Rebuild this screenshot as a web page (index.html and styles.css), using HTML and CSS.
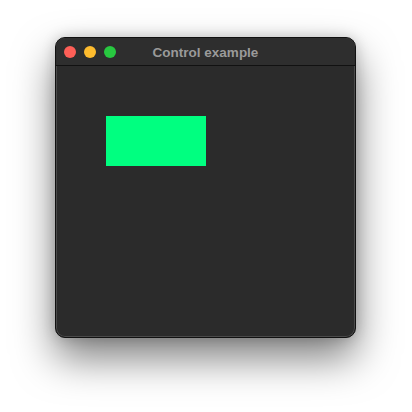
FILE: index.html
```html
<!DOCTYPE html>
<html>
<head>
<meta charset="utf-8">
<link rel="stylesheet" href="styles.css">
</head>
<body>
<div class="window">
  <div class="titlebar">
    <div class="lights">
      <span class="light red"></span>
      <span class="light yellow"></span>
      <span class="light green"></span>
    </div>
    <div class="title">Control example</div>
  </div>
  <div class="content">
    <div class="box"></div>
  </div>
</div>
</body>
</html>
```
FILE: styles.css
```css
html, body {
  margin: 0;
  padding: 0;
  background: #ffffff;
  width: 412px;
  height: 412px;
  overflow: hidden;
}
body {
  padding-top: 37px;
  padding-left: 55px;
  box-sizing: border-box;
  font-family: "Liberation Sans", Arial, sans-serif;
}
.window {
  width: 301px;
  height: 301px;
  box-sizing: border-box;
  border: 1px solid #111;
  border-radius: 10px;
  background: #2b2b2b;
  box-shadow: inset 0 0 0 1px #4a4a4a, 0 20px 40px rgba(0,0,0,0.5), 0 0 14px rgba(0,0,0,0.18);
  display: flex;
  flex-direction: column;
  overflow: hidden;
}
.titlebar {
  height: 27px;
  flex: none;
  border-bottom: 1px solid #111;
  background: #2e2e2e;
  position: relative;
  display: flex;
  align-items: center;
}
.lights {
  display: flex;
  gap: 8px;
  padding-left: 8px;
  padding-top: 1px;
}
.light {
  width: 12px;
  height: 12px;
  border-radius: 50%;
  display: block;
}
.red { background: #fe5f57; }
.yellow { background: #febc2e; }
.green { background: #28c840; }
.title {
  position: absolute;
  left: 0;
  right: 0;
  top: 0;
  bottom: 0;
  display: flex;
  align-items: center;
  justify-content: center;
  color: #9a9a9a;
  font-weight: bold;
  font-size: 13.5px;
  padding-top: 1px;
}
.content {
  flex: 1;
  padding: 50px;
}
.box {
  width: 100px;
  height: 50px;
  background: #00ff80;
}
```
